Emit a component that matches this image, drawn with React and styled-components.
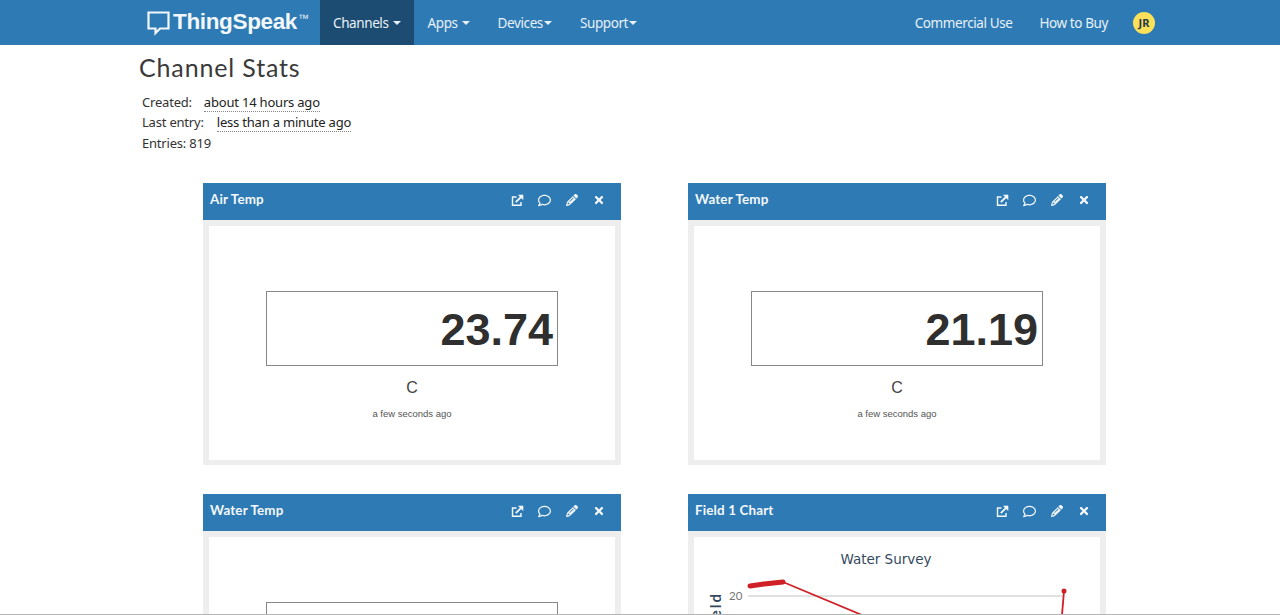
import styled, { createGlobalStyle } from "styled-components";
import { FaRegComment, FaTimes } from "react-icons/fa";
import { FaPencil } from "react-icons/fa6";

const GlobalStyle = createGlobalStyle`
	html, body {
		margin: 0;
		height: 615px;
		overflow: hidden;
		background: #fff;
		font-family: "Noto Sans", sans-serif;
		color: #333;
	}
`;

const Navbar = styled.nav`
	display: flex;
	align-items: stretch;
	height: 45px;
	padding: 0 125px 0 147px;
	background: #2e7ab4;
	color: #e8f1f8;
	font-size: 13.5px;
`;

const Logo = styled.div`
	display: flex;
	align-items: center;
	gap: 3px;
	width: 173px;
	color: #f2f7fb;
`;

const LogoText = styled.span`
	font-family: "Liberation Sans", Arial, sans-serif;
	font-size: 22.5px;
	font-weight: 700;
	letter-spacing: -0.35px;
	position: relative;
	top: -1px;

	sup {
		font-size: 11px;
		font-weight: 400;
		vertical-align: 7px;
		line-height: 0;
		margin-left: 1px;
	}
`;

const NavItem = styled.a`
	display: flex;
	align-items: center;
	padding: 0 ${(p) => (p.$active ? 13 : 14)}px 0 ${(p) => (p.$active ? 13 : 14)}px;
	background: ${(p) => (p.$active ? "#1d4c72" : "transparent")};
	letter-spacing: -0.4px;
`;

const Caret = styled.span`
	display: inline-block;
	margin-left: ${(p) => p.$gap}px;
	border-top: 4px solid #e8f1f8;
	border-left: 4px solid transparent;
	border-right: 4px solid transparent;
`;

const NavRight = styled.div`
	display: flex;
	align-items: center;
	margin-left: auto;
`;

const NavLink = styled.a`
	margin-right: ${(p) => p.$gap}px;
	letter-spacing: -0.4px;
`;

const Avatar = styled.div`
	display: flex;
	align-items: center;
	justify-content: center;
	width: 22px;
	height: 22px;
	border-radius: 50%;
	background: #fbe05a;
	color: #23384a;
	font-size: 11px;
	font-weight: 700;
`;

const Main = styled.main`
	padding: 7px 0 0 139px;
`;

const Title = styled.h1`
	margin: 0;
	font-family: "Lato", sans-serif;
	font-size: 25px;
	line-height: 30px;
	font-weight: 400;
	letter-spacing: 0.85px;
	color: #3a3a3a;
`;

const Stats = styled.div`
	margin: 9.5px 0 0 3px;
	font-size: 13px;
	line-height: 20.5px;
	letter-spacing: -0.2px;
`;

const StatValue = styled.span`
	margin-left: ${(p) => p.$gap}px;
	border-bottom: 1px dotted #888;
	color: #222;
`;

const Grid = styled.div`
	display: grid;
	grid-template-columns: 418px 418px;
	column-gap: 67px;
	row-gap: 29px;
	margin: 29.5px 0 0 64px;
`;

const Card = styled.section`
	height: 282px;
`;

const CardHeader = styled.header`
	display: flex;
	align-items: center;
	justify-content: space-between;
	height: 37px;
	padding: 0 16px 0 7px;
	background: #2e7ab4;
	color: #f4f8fb;
`;

const CardTitle = styled.h3`
	margin: 0 0 5px;
	font-family: "Lato", sans-serif;
	font-size: 13.4px;
	font-weight: 700;
	letter-spacing: 0.15px;
`;

const Actions = styled.div`
	display: flex;
	align-items: center;
	gap: 14px;
	margin-bottom: 2px;
`;

const ActionIcon = styled.span`
	display: flex;
	align-items: center;
	justify-content: center;
	width: 13px;
	height: 13px;
`;

const CardBody = styled.div`
	box-sizing: border-box;
	height: 245px;
	border: 6px solid #eeeeee;
	border-bottom-width: 5px;
	background: #fff;
`;

const Widget = styled.div`
	display: flex;
	flex-direction: column;
	align-items: center;
	padding-top: 65px;
`;

const ValueBox = styled.div`
	box-sizing: border-box;
	width: 292px;
	height: 75px;
	padding-right: 4px;
	border: 1px solid #888;
	font-family: "Liberation Sans", Arial, sans-serif;
	font-size: 45px;
	font-weight: 700;
	line-height: 75px;
	text-align: right;
	color: #2f2f2f;
`;

const Unit = styled.div`
	margin-top: 12px;
	font-family: "Liberation Sans", Arial, sans-serif;
	font-size: 16px;
	line-height: 19px;
	color: #444;
`;

const Updated = styled.div`
	margin-top: 11px;
	font-family: "Liberation Sans", Arial, sans-serif;
	font-size: 9.5px;
	line-height: 12px;
	color: #555;
`;

const ChartFrame = styled.svg`
	display: block;
	width: 405px;
	height: 233px;
`;

const ScreenEdge = styled.div`
	position: fixed;
	left: 0;
	right: 0;
	bottom: 0;
	height: 1px;
	background: #b5b5b5;
`;

function LogoMark() {
	return (
		<svg width="23" height="26" viewBox="0 0 23 26" fill="none">
			<path
				d="M1.5 2.5H21.5V18.5H13L8.5 23V18.5H1.5Z"
				stroke="#f2f7fb"
				strokeWidth="2.2"
			/>
		</svg>
	);
}

function ExternalIcon() {
	return (
		<svg width="13" height="13" viewBox="0 0 13 13" fill="none" stroke="currentColor">
			<path d="M10 8V11.2H1.5V3H5.5" strokeWidth="1.4" />
			<path d="M4.8 8.2L11 2" strokeWidth="1.8" />
			<path d="M7.5 1H12V5.5Z" fill="currentColor" strokeWidth="0.6" />
		</svg>
	);
}

function CardTop({ title }) {
	return (
		<CardHeader>
			<CardTitle>{title}</CardTitle>
			<Actions>
				<ActionIcon>
					<ExternalIcon />
				</ActionIcon>
				<ActionIcon>
					<FaRegComment size={13} />
				</ActionIcon>
				<ActionIcon>
					<FaPencil size={12} />
				</ActionIcon>
				<ActionIcon>
					<FaTimes size={12} />
				</ActionIcon>
			</Actions>
		</CardHeader>
	);
}

function ValueCard({ title, value }) {
	return (
		<Card>
			<CardTop title={title} />
			<CardBody>
				<Widget>
					<ValueBox>{value}</ValueBox>
					<Unit>C</Unit>
					<Updated>a few seconds ago</Updated>
				</Widget>
			</CardBody>
		</Card>
	);
}

function ChartCard({ title }) {
	return (
		<Card>
			<CardTop title={title} />
			<CardBody>
				<ChartFrame viewBox="0 0 405 233">
					<text
						x="192"
						y="27"
						textAnchor="middle"
						fontFamily="DejaVu Sans, sans-serif"
						fontSize="13.5"
						fill="#34495e"
					>
						Water Survey
					</text>
					<text
						transform="translate(27 55) rotate(-90)"
						textAnchor="end"
						fontFamily="Lato, sans-serif"
						fontWeight="700"
						fontSize="15"
						letterSpacing="2"
						fill="#34495e"
					>
						Field
					</text>
					<text x="35" y="63" fontFamily="Lato, sans-serif" fontSize="11.5" fill="#777">
						20
					</text>
					<line x1="54" y1="59" x2="370" y2="59" stroke="#c4c4c4" />
					<line x1="54" y1="110" x2="370" y2="110" stroke="#c4c4c4" />
					<polyline
						points="56,49 70,47 89,45"
						fill="none"
						stroke="#cf2027"
						strokeWidth="5"
						strokeLinecap="round"
					/>
					<polyline
						points="89,45 168,78 240,120 362,150 370,54"
						fill="none"
						stroke="#cf2027"
						strokeWidth="1.8"
					/>
					<circle cx="370" cy="54" r="2.5" fill="#cf2027" />
				</ChartFrame>
			</CardBody>
		</Card>
	);
}

export default function App() {
	return (
		<>
			<GlobalStyle />
			<Navbar>
				<Logo>
					<LogoMark />
					<LogoText>
						ThingSpeak<sup>™</sup>
					</LogoText>
				</Logo>
				<NavItem $active>
					Channels
					<Caret $gap={4} />
				</NavItem>
				<NavItem>
					Apps
					<Caret $gap={4} />
				</NavItem>
				<NavItem>
					Devices
					<Caret $gap={1} />
				</NavItem>
				<NavItem>
					Support
					<Caret $gap={1} />
				</NavItem>
				<NavRight>
					<NavLink $gap={27}>Commercial Use</NavLink>
					<NavLink $gap={25}>How to Buy</NavLink>
					<Avatar>JR</Avatar>
				</NavRight>
			</Navbar>
			<Main>
				<Title>Channel Stats</Title>
				<Stats>
					<div>
						Created:<StatValue $gap={12}>about 14 hours ago</StatValue>
					</div>
					<div>
						Last entry:<StatValue $gap={13}>less than a minute ago</StatValue>
					</div>
					<div>Entries: 819</div>
				</Stats>
				<Grid>
					<ValueCard title="Air Temp" value="23.74" />
					<ValueCard title="Water Temp" value="21.19" />
					<ValueCard title="Water Temp" value="21.19" />
					<ChartCard title="Field 1 Chart" />
				</Grid>
			</Main>
			<ScreenEdge />
		</>
	);
}
